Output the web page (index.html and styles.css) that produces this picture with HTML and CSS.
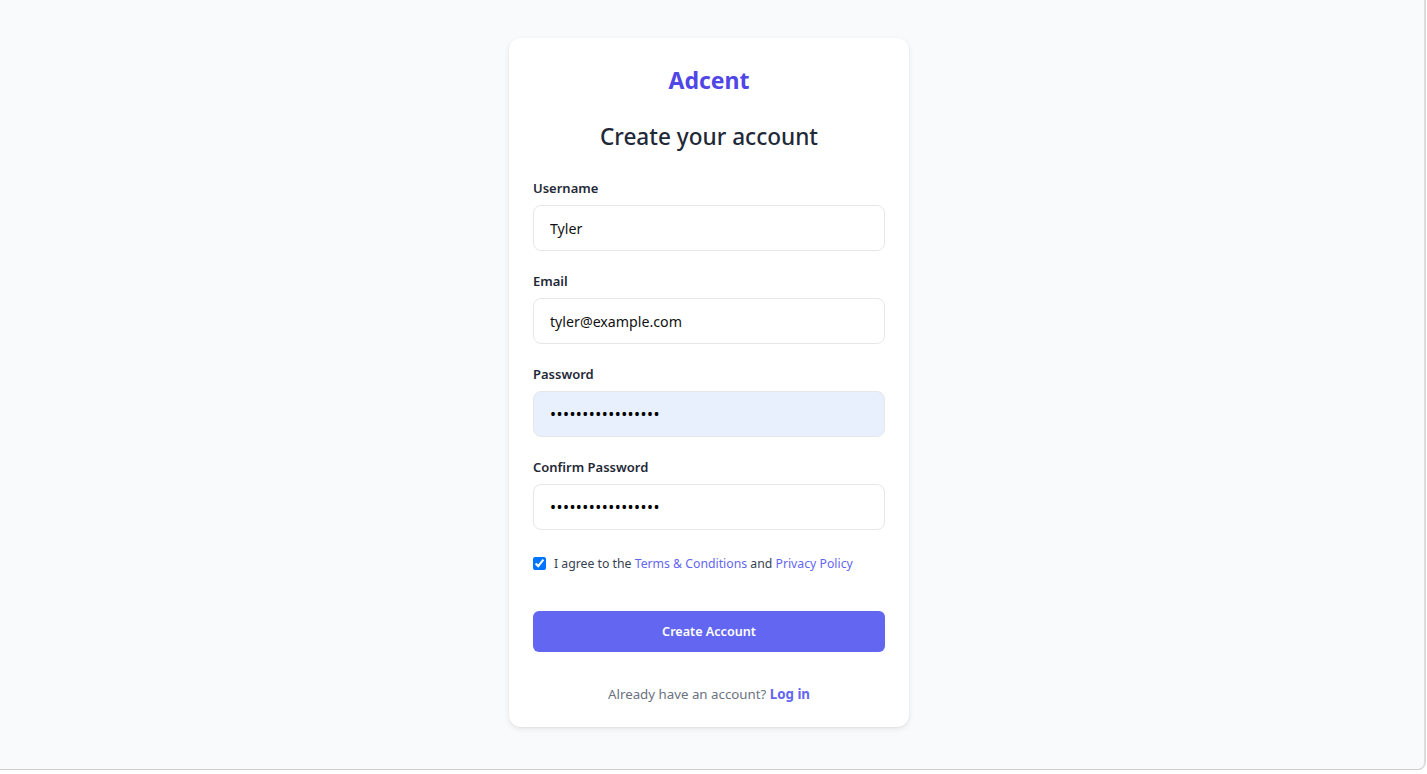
FILE: index.html
```html
<!DOCTYPE html>
<html lang="en">
<head>
<meta charset="utf-8">
<title>Adcent - Create your account</title>
<link rel="stylesheet" href="styles.css">
</head>
<body>
<div class="frame">
  <main class="page">
    <form class="card">
      <div class="brand">Adcent</div>
      <h1 class="title">Create your account</h1>
      <div class="field">
        <label class="label" for="username">Username</label>
        <input class="input" id="username" type="text" value="Tyler">
      </div>
      <div class="field">
        <label class="label" for="email">Email</label>
        <input class="input" id="email" type="email" value="tyler@example.com">
      </div>
      <div class="field">
        <label class="label" for="password">Password</label>
        <input class="input input-secret input-filled" id="password" type="password" value="Password123456789">
      </div>
      <div class="field">
        <label class="label" for="confirm">Confirm Password</label>
        <input class="input input-secret" id="confirm" type="password" value="Password123456789">
      </div>
      <div class="agree">
        <input class="check" id="agree" type="checkbox" checked>
        <label for="agree">I agree to the <a class="link" href="#">Terms &amp; Conditions</a> and <a class="link" href="#">Privacy Policy</a></label>
      </div>
      <button class="btn" type="button">Create Account</button>
      <p class="foot">Already have an account? <a class="login" href="#">Log in</a></p>
    </form>
  </main>
</div>
</body>
</html>
```
FILE: styles.css
```css
* { box-sizing: border-box; }
html, body { margin: 0; padding: 0; background: #ffffff; }
body {
  font-family: "Noto Sans", "Open Sans", "Liberation Sans", sans-serif;
  color: #1f2937;
}
.frame {
  width: 1426px;
  height: 770px;
  background: #f9fafb;
  border-right: 2px solid #dcdcdc;
  border-bottom: 1px solid #cfcfcf;
  border-bottom-right-radius: 8px;
  overflow: hidden;
}
.page {
  display: flex;
  justify-content: center;
  padding: 38px 6px 0 0;
}
.card {
  width: 400px;
  background: #ffffff;
  border-radius: 12px;
  box-shadow: 0 2px 6px rgba(0,0,0,0.08), 0 1px 2px rgba(0,0,0,0.05);
  padding: 24px 24px 23px;
  display: flex;
  flex-direction: column;
}
.brand {
  text-align: center;
  font-size: 23px;
  line-height: 36px;
  font-weight: 700;
  color: #4f46e5;
}
.title {
  margin: 23px 0 25px;
  text-align: center;
  font-size: 22.6px;
  line-height: 32px;
  font-weight: 500;
  color: #1f2937;
}
.field {
  display: flex;
  flex-direction: column;
  gap: 7px;
  margin-bottom: 20px;
}
.label {
  font-size: 13px;
  line-height: 20px;
  font-weight: 600;
  color: #1f2937;
}
.input {
  height: 46px;
  padding: 0 16px;
  font-family: inherit;
  font-size: 14.2px;
  color: #111;
  border: 1px solid #e5e7eb;
  border-radius: 8px;
  background: #ffffff;
  outline: none;
}
.input-secret {
  font-size: 16px;
  letter-spacing: 0.45px;
  color: #000;
}
.input-filled { background: #e8f0fe; }
.agree {
  display: flex;
  align-items: center;
  gap: 8px;
  font-size: 12.25px;
  color: #374151;
  margin: 5px 0 39px;
}
.check {
  margin: 0;
  width: 13px;
  height: 13px;
  accent-color: #0075ff;
}
.link { color: #6366f1; text-decoration: none; }
.btn {
  height: 41px;
  border: none;
  border-radius: 6px;
  background: #6366f1;
  color: #ffffff;
  font-family: inherit;
  font-size: 12.6px;
  font-weight: 600;
}
.foot {
  margin: 32px 0 0;
  text-align: center;
  font-size: 13.3px;
  line-height: 20px;
  color: #6b7280;
}
.login { color: #6366f1; font-weight: 700; text-decoration: none; }
```
